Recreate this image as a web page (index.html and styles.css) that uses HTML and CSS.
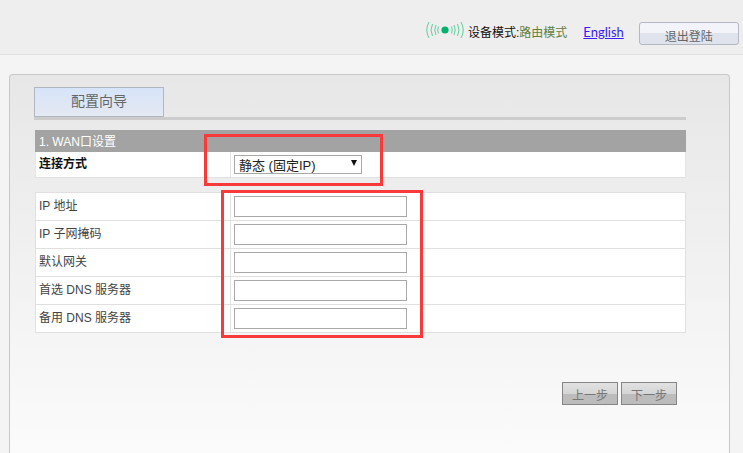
FILE: index.html
```html
<!DOCTYPE html>
<html lang="zh-CN">
<head>
<meta charset="utf-8">
<title>配置向导</title>
<link rel="stylesheet" href="styles.css">
</head>
<body>
<header class="topbar">
  <svg class="signal" width="38" height="18" viewBox="0 0 38 18" fill="none" stroke="#5fcf9f" stroke-width="1">
    <circle cx="19" cy="9" r="3.6" fill="#00b26e" stroke="none"/>
    <path d="M12.5 5.5q-1.6 3.500 0 7M10 4q-2.500 5 0 10M6.500 3q-3 6 0 12M3 1q-4.500 8 0 16"/>
    <path d="M25.500 5.500q1.600 3.500 0 7M28 4q2.500 5 0 10M31.500 3q3 6 0 12M35 1q4.500 8 0 16"/>
  </svg>
  <span class="mode">设备模式:<span class="mode-value">路由模式</span></span>
  <a class="lang" href="#">English</a>
  <button class="logout" type="button">退出登陆</button>
</header>
<main class="page">
  <section class="panel">
    <nav class="tabs"><div class="tab">配置向导</div></nav>
    <div class="section-title">1. WAN口设置</div>
    <div class="row row-first">
      <div class="label strong">连接方式</div>
      <div class="field">
        <div class="select-wrap">
          <select class="select"><option>静态 (固定IP)</option></select>
        </div>
      </div>
    </div>
    <div class="fields">
      <div class="row"><div class="label">IP 地址</div><div class="field"><input class="input" type="text"></div></div>
      <div class="row"><div class="label">IP 子网掩码</div><div class="field"><input class="input" type="text"></div></div>
      <div class="row"><div class="label">默认网关</div><div class="field"><input class="input" type="text"></div></div>
      <div class="row"><div class="label">首选 DNS 服务器</div><div class="field"><input class="input" type="text"></div></div>
      <div class="row"><div class="label">备用 DNS 服务器</div><div class="field"><input class="input" type="text"></div></div>
    </div>
    <div class="actions">
      <button class="step" type="button">上一步</button>
      <button class="step" type="button">下一步</button>
    </div>
  </section>
</main>
<div class="mark mark-select"></div>
<div class="mark mark-fields"></div>
</body>
</html>
```
FILE: styles.css
```css
* { box-sizing: border-box; }
html, body { margin: 0; height: 453px; overflow: hidden; }
body {
  position: relative;
  font-family: "Liberation Sans", "Noto Sans CJK SC", sans-serif;
  font-size: 12px;
  color: #333;
  background: #ececec;
}
.topbar {
  height: 55px;
  background: #eeeeee;
  border-bottom: 1px solid #e0e0e0;
  display: flex;
  align-items: flex-start;
  padding: 22px 4px 0 426px;
}
.signal { margin-top: -1px; flex: none; }
.mode { margin: 1px 0 0 4px; line-height: 20px; color: #111; white-space: nowrap; }
.mode-value { color: #5f8040; }
.lang { margin-left: 16px; line-height: 20px; color: #3a1aff; font-family: "Lato", "Liberation Sans", sans-serif; font-size: 13px; white-space: nowrap; }
.logout {
  margin-left: 15px;
  width: 100px;
  height: 23px;
  padding: 4px 0 0;
  border: 1px solid #b4b7c4;
  border-radius: 3px;
  background: linear-gradient(#f3f4f9 0 48%, #dfe3ec 48%);
  color: #666;
  font: 12px/16px "Noto Sans CJK SC", sans-serif;
}
.page {
  height: 398px;
  padding: 19px 13px 0 9px;
  background: #f4f4f4;
}
.panel {
  height: 379px;
  padding: 12px 43px 0 24px;
  border: 1px solid #c8c8c8;
  border-bottom: 0;
  border-radius: 4px 4px 0 0;
  background: linear-gradient(#e7e7e7, #fbfbfb);
}
.tabs { height: 33px; border-bottom: 3px solid #cccccc; }
.tab {
  width: 130px;
  height: 30px;
  border: 1px solid #b1b7c2;
  background: linear-gradient(#d6e4f9, #e4e9f2);
  color: #666;
  font-size: 14px;
  line-height: 26px;
  text-align: center;
}
.section-title {
  margin: 10px 0 0 1px;
  height: 22px;
  background: #a3a3a3;
  color: #fff;
  padding-left: 4px;
  line-height: 24px;
  font-size: 12px;
}
.row {
  display: flex;
  height: 28px;
  background: #fff;
  border-bottom: 1px solid #e0e0e0;
}
.row-first {
  height: 26px;
  margin-left: 1px;
  border-left: 1px solid #e6e6e6;
  border-right: 1px solid #e6e6e6;
}
.label {
  width: 195px;
  flex: none;
  padding-left: 3px;
  line-height: 26px;
  color: #444;
  border-right: 1px solid #e2e2e2;
}
.strong { font-weight: 700; color: #111; line-height: 25px; width: 195px; }
.field { padding: 3px 0 0 3px; }
.select-wrap { position: relative; width: 128px; height: 19px; }
.select-wrap::after {
  content: "";
  position: absolute;
  right: 5px;
  top: 5px;
  border-left: 3.500px solid transparent;
  border-right: 3.500px solid transparent;
  border-top: 6px solid #111;
}
.select {
  appearance: none;
  display: block;
  width: 128px;
  height: 19px;
  padding: 2px 0 0 4px;
  border: 1px solid #a8a8a8;
  border-radius: 0;
  background: #fff;
  color: #222;
  font: 13px/15px "Liberation Sans", "Noto Sans CJK SC", sans-serif;
}
.fields {
  margin: 14px 0 0 1px;
  border: 1px solid #e0e0e0;
  border-bottom: 0;
  height: 141px;
}
.input {
  display: block;
  width: 173px;
  height: 21px;
  margin: 0;
  padding: 0 3px;
  border: 1px solid #a8a8a8;
  border-radius: 0;
  background: #fff;
}
.actions {
  display: flex;
  justify-content: flex-end;
  gap: 3px;
  margin-top: 49px;
  padding-right: 9px;
}
.step {
  width: 56px;
  height: 23px;
  padding: 3px 0 0;
  border: 1px solid #868686;
  background: linear-gradient(#e2e2e2, #d4d4d4 54%, #bcbcbc 54%);
  color: #777;
  font: 12px/16px "Noto Sans CJK SC", sans-serif;
}
.mark { position: absolute; border: 3px solid #f93a3a; pointer-events: none; }
.mark-select { left: 204px; top: 134px; width: 179px; height: 52px; }
.mark-fields { left: 221px; top: 190px; width: 202px; height: 148px; }
```
